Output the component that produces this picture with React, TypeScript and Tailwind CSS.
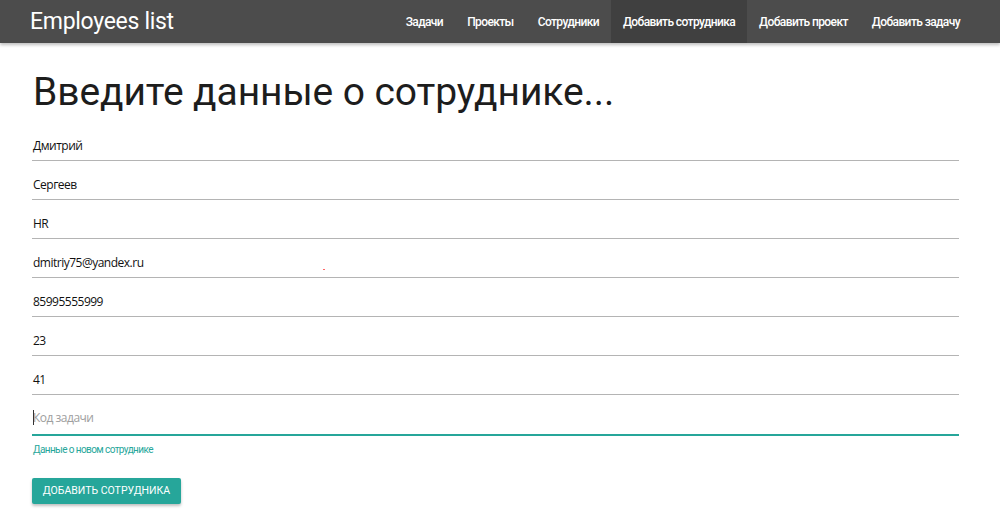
import React from "react";

const fields = ["Дмитрий", "Сергеев", "HR", "dmitriy75@yandex.ru", "85995555999", "23", "41"];
const links = ["Задачи", "Проекты", "Сотрудники", "Добавить сотрудника", "Добавить проект", "Добавить задачу"];

export default function App() {
  return (
    <div className="relative w-[1000px] h-[521px] bg-white overflow-hidden" style={{ fontFamily: "Roboto, sans-serif" }}>
      <nav className="h-[43px] bg-[#4c4c4c] flex items-stretch justify-between shadow-[0_2px_3px_rgba(0,0,0,0.25)] relative z-10">
        <div className="pl-[30px] flex items-center text-white text-[23px] tracking-[-0.3px] leading-none font-['Roboto']">Employees list</div>
        <ul className="flex items-stretch pr-[28px]">
          {links.map((l, i) => (
            <li
              key={l}
              className={`flex items-center px-[12px] text-[12px] text-white font-medium tracking-[-0.6px] ${i === 3 ? "bg-[#404040]" : ""}`}
            >
              {l}
            </li>
          ))}
        </ul>
      </nav>
      <main className="pl-[32px] pr-[41px]">
        <h1 className="text-[39px] leading-none text-[#1d1d1d] font-normal mt-[30px] pl-[1px] tracking-[-0.1px]">Введите данные о сотруднике...</h1>
        <div className="mt-[10px]">
          {fields.map((f) => (
            <div key={f} className="h-[39px] border-b border-[#b4b4b4] flex items-end pb-[5px] text-[12px] tracking-[-0.5px] text-[#111] font-['Open_Sans']">
              <span className="pl-[1px]">{f}</span>
            </div>
          ))}
          <div className="relative h-[41px] border-b-2 border-[#26a69a] flex items-end pb-[7px] text-[12px] tracking-[-0.5px] text-[#9e9e9e] font-['Open_Sans']">
            <span className="absolute left-[1px] bottom-[9px] w-[1px] h-[15px] bg-[#333]"></span>
            <span className="pl-[1px]">Код задачи</span>
          </div>
          <div className="text-[10px] text-[#26a69a] mt-[9px] leading-none tracking-[-0.6px] pl-[1px]">Данные о новом сотруднике</div>
        </div>
        <button className="mt-[23px] h-[26px] w-[149px] bg-[#26a69a] text-white text-[10.5px] uppercase tracking-[0px] rounded-[2px] shadow-[0_2px_3px_rgba(0,0,0,0.25)] font-['Roboto']">
          Добавить сотрудника
        </button>
      </main>
      <span className="absolute left-[323px] top-[269px] w-[2px] h-[1px] bg-[#f66]"></span>
    </div>
  );
}
